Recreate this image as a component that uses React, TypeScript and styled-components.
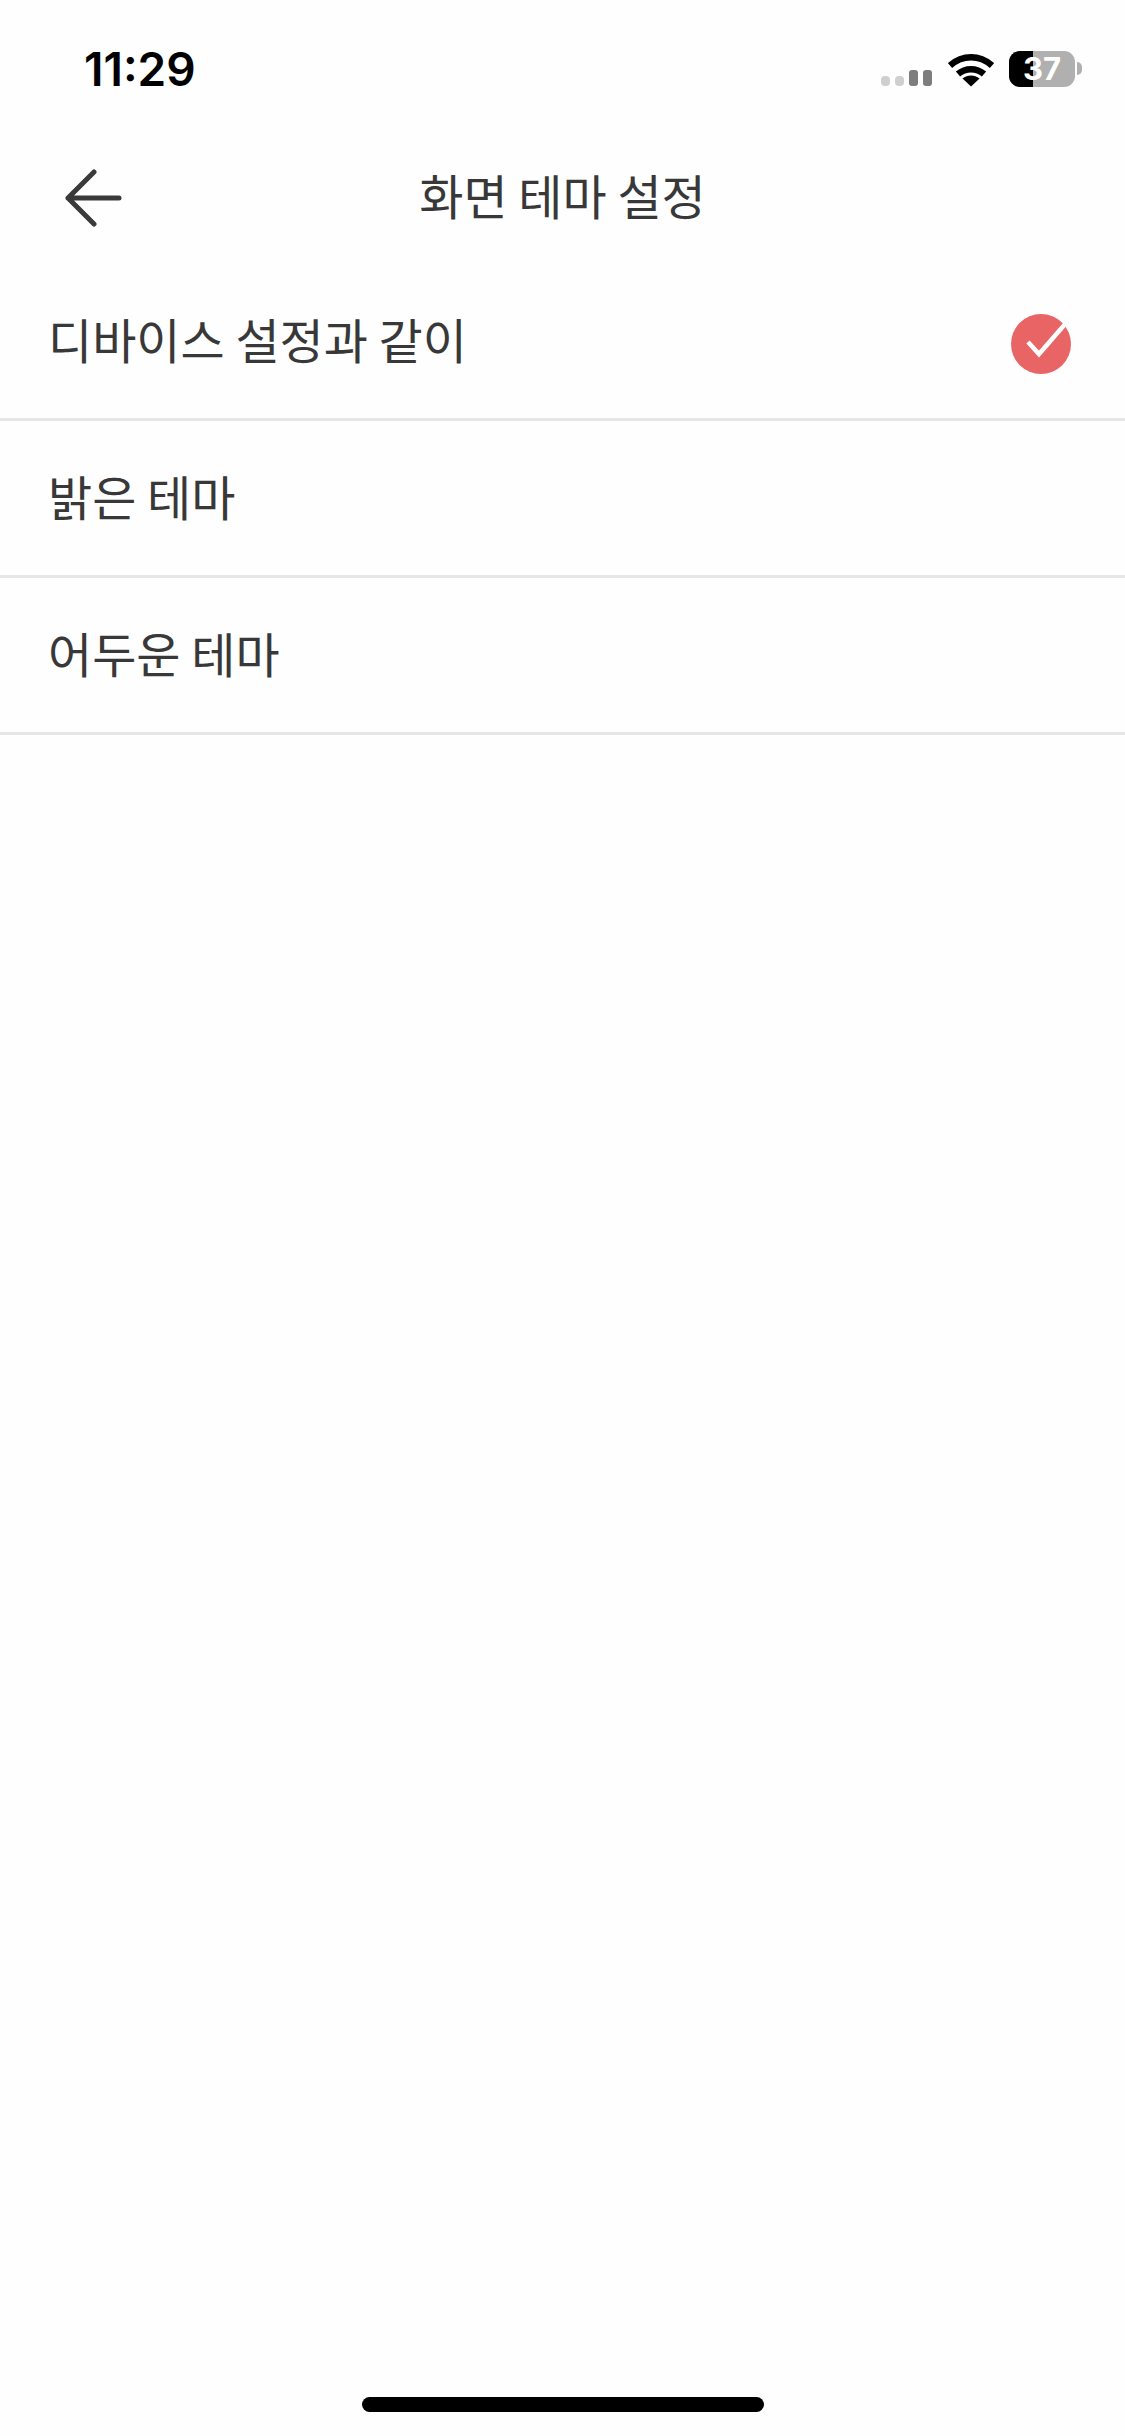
import React from 'react'
import styled, { createGlobalStyle } from 'styled-components'

const GlobalStyle = createGlobalStyle`
	html,
	body {
		margin: 0;
		padding: 0;
		background: #fefefe;
	}
`

const options = [
	{ label: '디바이스 설정과 같이', selected: true },
	{ label: '밝은 테마', selected: false },
	{ label: '어두운 테마', selected: false },
]

const App = () => {
	return (
		<Page>
			<GlobalStyle />
			<StatusBar>
				<Clock>11:29</Clock>
				<StatusIcons>
					<svg width="52" height="18" viewBox="0 0 52 18">
						<rect x="0" y="7" width="9" height="10" rx="4" fill="#cfcfcf" />
						<rect x="14" y="7" width="9" height="10" rx="4" fill="#cfcfcf" />
						<rect x="28" y="1" width="9" height="16" rx="3" fill="#7d7d7d" />
						<rect x="42" y="1" width="9" height="16" rx="3" fill="#7d7d7d" />
					</svg>
					<svg width="46" height="34" viewBox="0 0 46 34">
						<path d="M2 12.5C14.500 1.500 31.500 1.500 44 12.500" fill="none" stroke="#000" strokeWidth="6.500" />
						<path d="M10 21C17.500 14.500 28.500 14.500 36 21" fill="none" stroke="#000" strokeWidth="6.500" />
						<path d="M23 33.500L14.500 25.500C19.500 21.500 26.500 21.500 31.500 25.500Z" fill="#000" />
					</svg>
					<Battery>
						<BatteryFill $level={37} />
						<BatteryLevel>37</BatteryLevel>
						<BatteryCap />
					</Battery>
				</StatusIcons>
			</StatusBar>

			<Header>
				<BackButton aria-label="뒤로">
					<svg width="60" height="58" viewBox="0 0 60 58">
						<path
							d="M30 3L4 29L30 55M4 29H55"
							fill="none"
							stroke="#3a3a3a"
							strokeWidth="5"
							strokeLinecap="round"
							strokeLinejoin="round"
						/>
					</svg>
				</BackButton>
				<Title>화면 테마 설정</Title>
			</Header>

			<OptionList>
				{options.map((option) => (
					<OptionRow key={option.label}>
						<OptionLabel>{option.label}</OptionLabel>
						{option.selected && (
							<CheckMark width="62" height="62" viewBox="0 0 62 62">
								<circle cx="30" cy="31" r="30" fill="#e96565" />
								<path d="M17 29L28 41L55 10" fill="none" stroke="#fff" strokeWidth="4.500" />
							</CheckMark>
						)}
					</OptionRow>
				))}
			</OptionList>

			<HomeIndicator />
		</Page>
	)
}

export default App

const Page = styled.div`
	display: flex;
	flex-direction: column;
	width: 1125px;
	height: 2436px;
	overflow: hidden;
	background: #fefefe;
	font-family: 'Noto Sans CJK KR', 'Inter', sans-serif;
`

const StatusBar = styled.div`
	display: flex;
	justify-content: space-between;
	align-items: flex-start;
	height: 130px;
	padding: 42px 43px 0 84px;
	box-sizing: border-box;
`

const Clock = styled.div`
	font-family: 'Inter', sans-serif;
	font-size: 46px;
	font-weight: 600;
	line-height: 54px;
	color: #000;
`

const StatusIcons = styled.div`
	display: flex;
	align-items: flex-end;
	gap: 15px;
	height: 45px;
`

const Battery = styled.div`
	position: relative;
	display: flex;
	justify-content: center;
	align-items: center;
	width: 66px;
	height: 36px;
	margin-right: 7px;
	border-radius: 11px;
	background: #b0b0b0;
`

const BatteryFill = styled.div<{ $level: number }>`
	position: absolute;
	top: 0;
	bottom: 0;
	left: 0;
	width: ${(p) => p.$level}%;
	border-radius: 11px 0 0 11px;
	background: #000;
`

const BatteryLevel = styled.span`
	position: relative;
	font-family: 'Inter', sans-serif;
	font-size: 31px;
	font-weight: 700;
	line-height: 36px;
	color: #fff;
`

const BatteryCap = styled.div`
	position: absolute;
	top: 11px;
	right: -7px;
	width: 5px;
	height: 13px;
	border-radius: 0 6px 6px 0;
	background: #b0b0b0;
`

const Header = styled.header`
	position: relative;
	display: flex;
	justify-content: center;
	align-items: center;
	height: 134px;
`

const BackButton = styled.button`
	position: absolute;
	top: 39px;
	left: 64px;
	display: flex;
	padding: 0;
	border: 0;
	background: none;
`

const Title = styled.h1`
	margin: 0 0 6px;
	font-size: 48px;
	font-weight: 400;
	line-height: 64px;
	color: #383838;
`

const OptionList = styled.ul`
	margin: 0;
	padding: 0;
	list-style: none;
`

const OptionRow = styled.li`
	display: flex;
	justify-content: space-between;
	align-items: center;
	box-sizing: border-box;
	height: 157px;
	padding: 0 52px 0 48px;
	border-bottom: 3px solid #e6e6e6;
`

const OptionLabel = styled.span`
	padding-bottom: 7px;
	font-size: 48px;
	line-height: 64px;
	color: #383838;
`

const CheckMark = styled.svg`
	margin-top: 6px;
`

const HomeIndicator = styled.div`
	width: 402px;
	height: 15px;
	margin: auto auto 24px;
	border-radius: 8px;
	background: #000;
`
